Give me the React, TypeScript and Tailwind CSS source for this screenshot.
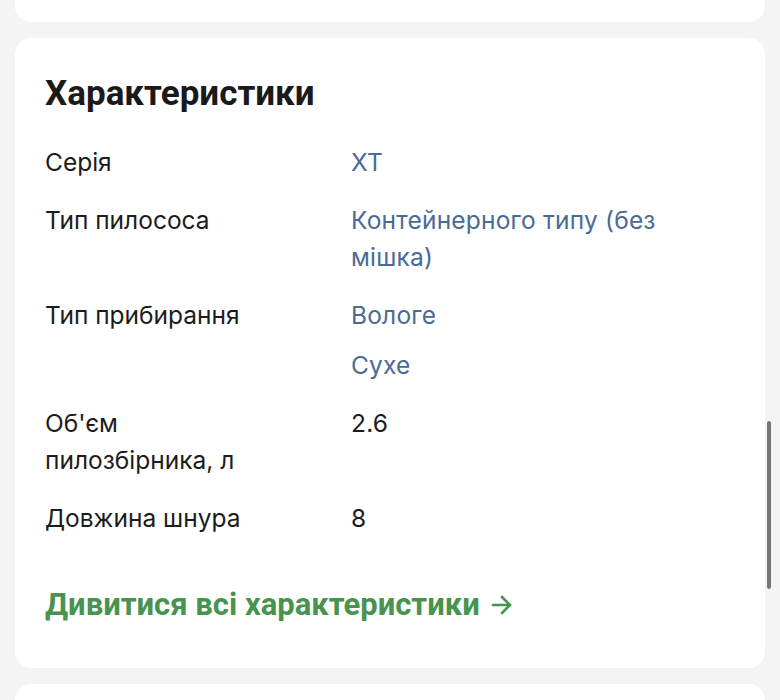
import React from "react";

const rows: { label: string[]; values: string[]; link: boolean }[] = [
  { label: ["Серія"], values: ["XT"], link: true },
  { label: ["Тип пилососа"], values: ["Контейнерного типу (без мішка)"], link: true },
  { label: ["Тип прибирання"], values: ["Вологе", "Сухе"], link: true },
  { label: ["Об'єм", "пилозбірника, л"], values: ["2.6"], link: false },
  { label: ["Довжина шнура"], values: ["8"], link: false },
];

export default function App() {
  return (
    <div className="relative w-[780px] h-[700px] overflow-hidden bg-[#f4f4f4]" style={{ fontFamily: "Inter, 'Noto Sans', sans-serif" }}>
      <div className="flex flex-col gap-4 px-[15px] pt-0">
        <div className="h-[22px] bg-white rounded-b-2xl" />
        <div className="bg-white rounded-2xl pl-[30px] pr-[30px] pt-[35px] pb-[45px] h-[630px]">
          <h2 className="text-[35px] leading-[42px] font-bold text-[#1a1a1a]" style={{ fontFamily: "Roboto, 'Liberation Sans', sans-serif" }}>
            Характеристики
          </h2>
          <div className="mt-[29px] flex flex-col gap-[21px]">
            {rows.map((r, i) => (
              <div key={i} className="flex text-[24.5px] leading-[37px] font-normal">
                <div className="w-[306px] shrink-0 text-[#1c1c1c]">
                  {r.label.map((l, j) => (
                    <div key={j}>{l}</div>
                  ))}
                </div>
                <div className="flex flex-col gap-[13px] w-[340px] tracking-[0.2px]">
                  {r.values.map((v, j) => (
                    <div key={j} className={r.link ? "text-[#4a6b95]" : "text-[#1c1c1c]"}>
                      {v}
                    </div>
                  ))}
                </div>
              </div>
            ))}
          </div>
          <div className="mt-[49px] flex items-center gap-[11px] text-[31px] leading-[38px] font-bold text-[#47934f]" style={{ fontFamily: "Roboto, 'Liberation Sans', sans-serif" }}>
            <span>Дивитися всі характеристики</span>
            <svg width="22" height="22" viewBox="0 0 22 22" fill="none" stroke="#47934f" strokeWidth="2.6" strokeLinecap="round" strokeLinejoin="round">
              <path d="M2 11h17" />
              <path d="M11 3l8 8-8 8" />
            </svg>
          </div>
        </div>
        <div className="h-[40px] bg-white rounded-t-2xl" />
      </div>
      <div className="absolute left-[767px] top-[421px] w-[4px] h-[168px] rounded-full bg-[#777]" />
    </div>
  );
}
